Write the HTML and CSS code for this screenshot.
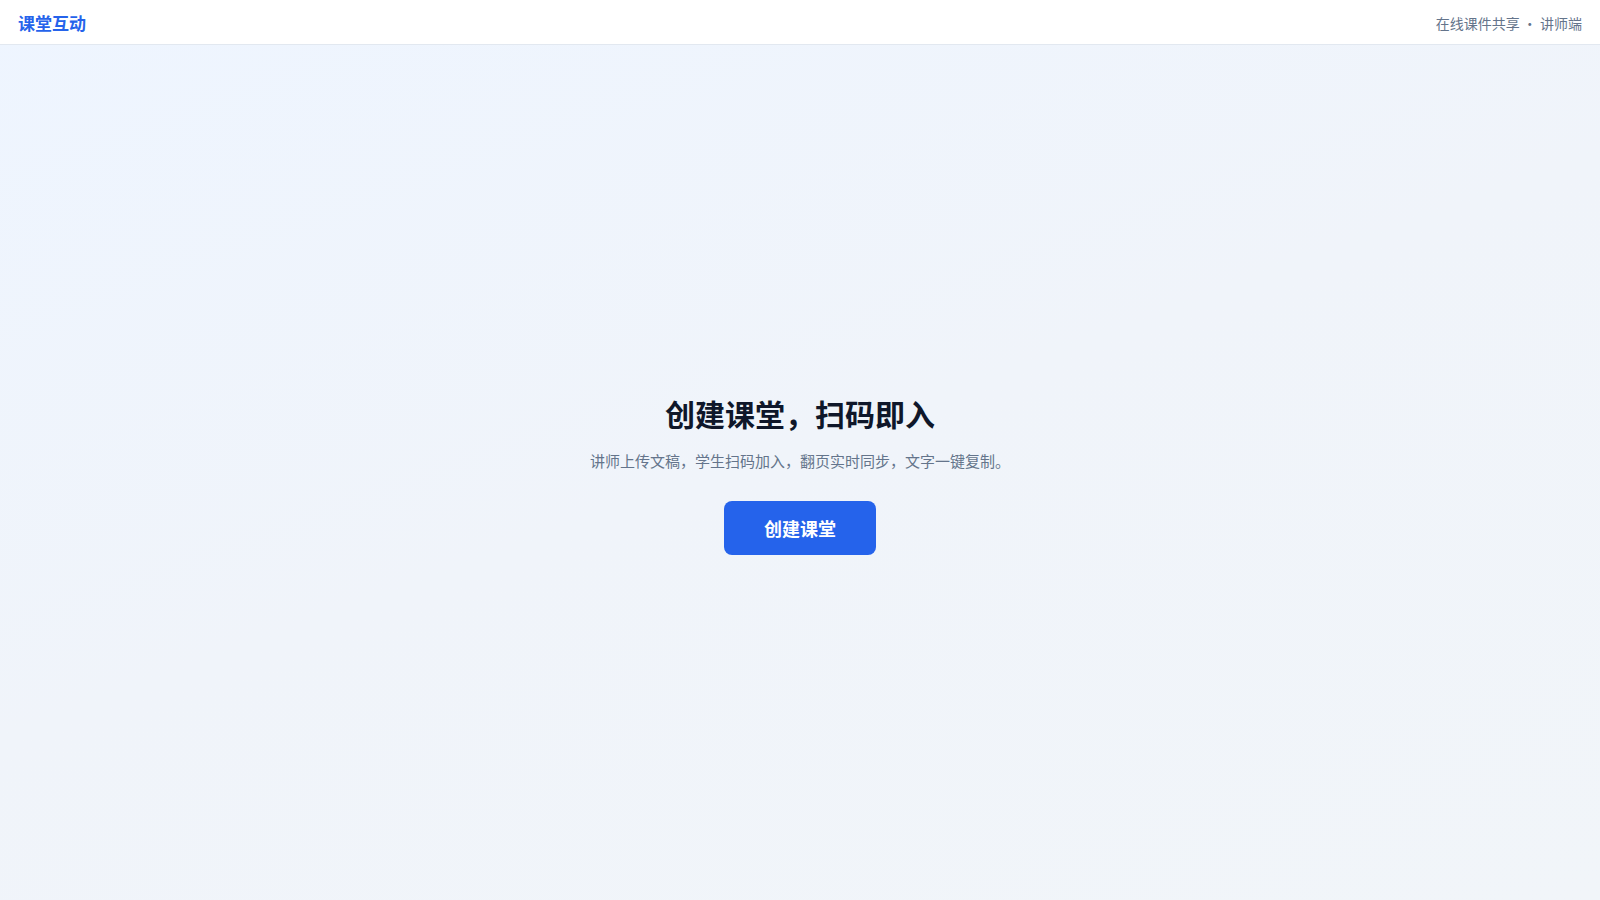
FILE: index.html
```html
<!DOCTYPE html>
<html lang="zh-CN">
<head>
<meta charset="utf-8">
<title>课堂互动</title>
<link rel="stylesheet" href="styles.css">
</head>
<body>
<header class="topbar">
  <div class="brand">课堂互动</div>
  <div class="tagline">在线课件共享 · 讲师端</div>
</header>
<main class="hero">
  <div class="hero-inner">
    <h1 class="hero-title">创建课堂，扫码即入</h1>
    <p class="hero-sub">讲师上传文稿，学生扫码加入，翻页实时同步，文字一键复制。</p>
    <button class="btn-primary" type="button">创建课堂</button>
  </div>
</main>
</body>
</html>
```

FILE: styles.css
```css
* { box-sizing: border-box; }
html, body { margin: 0; padding: 0; height: 100%; }
body {
  font-family: "Noto Sans CJK SC", "Noto Sans", "Liberation Sans", sans-serif;
  background: linear-gradient(160deg, #eef5ff 0%, #f0f4fa 50%, #f1f5f9 100%);
  color: #0f172a;
  min-height: 100vh;
  display: flex;
  flex-direction: column;
}
.topbar {
  height: 45px;
  flex: 0 0 45px;
  background: #ffffff;
  border-bottom: 1px solid #e2e8f0;
  display: flex;
  align-items: center;
  justify-content: space-between;
  padding: 0 18px;
}
.brand {
  font-size: 17px;
  font-weight: 700;
  color: #2563eb;
  line-height: 1;
  padding-top: 1px;
}
.tagline {
  font-size: 14px;
  color: #64748b;
  line-height: 1;
  padding-top: 1px;
}
.hero {
  flex: 1;
  display: flex;
  align-items: center;
  justify-content: center;
}
.hero-inner {
  display: flex;
  flex-direction: column;
  align-items: center;
  text-align: center;
  margin-top: 5px;
}
.hero-title {
  margin: 0;
  font-size: 30px;
  line-height: 36px;
  font-weight: 700;
  color: #0f172a;
}
.hero-sub {
  margin: 18px 0 0;
  font-size: 15px;
  line-height: 24px;
  color: #64748b;
}
.btn-primary {
  margin-top: 28px;
  height: 54px;
  width: 152px;
  border: none;
  border-radius: 8px;
  background: #2563eb;
  color: #ffffff;
  font-family: inherit;
  font-size: 18px;
  font-weight: 700;
  cursor: pointer;
}
```
